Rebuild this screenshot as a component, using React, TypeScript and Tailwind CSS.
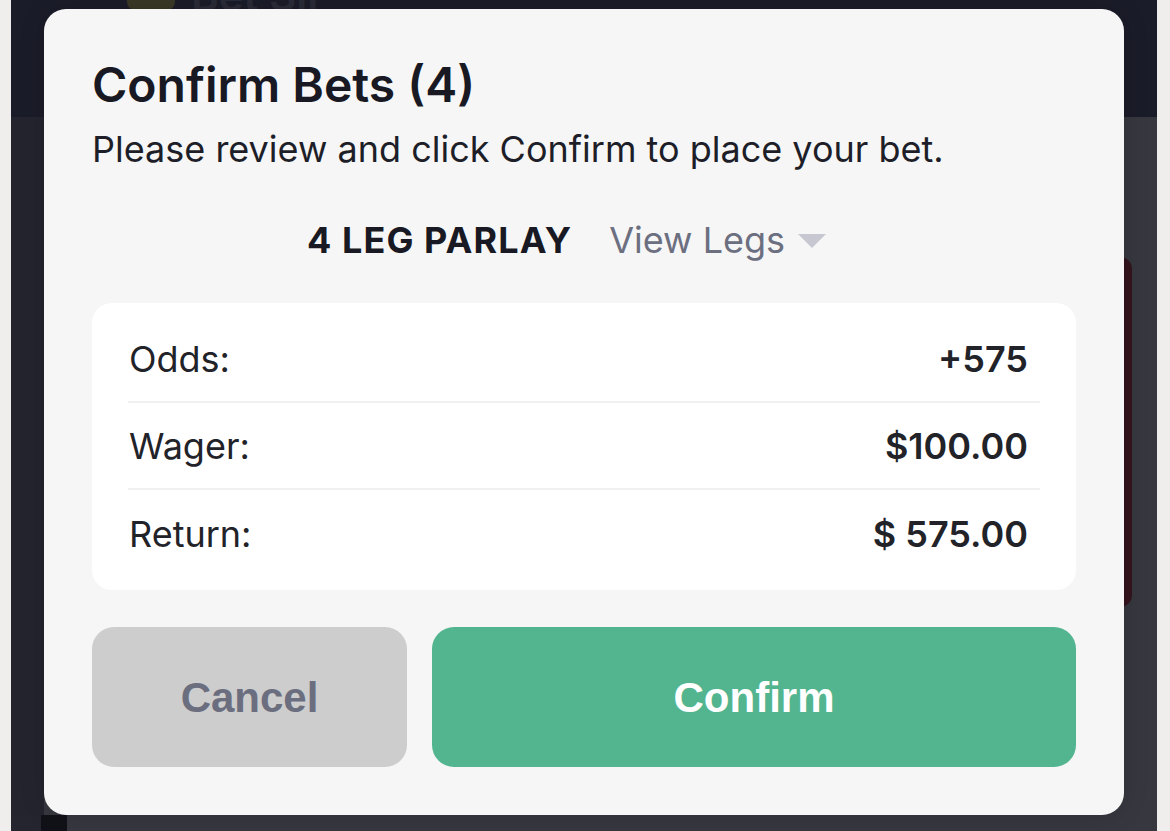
import { useState } from "react";

const ROWS = [
  { label: "Odds:", value: "+575" },
  { label: "Wager:", value: "$100.00" },
  { label: "Return:", value: "$ 575.00" },
];

function Caret() {
  return (
    <svg width="28" height="14" viewBox="0 0 28 14" className="ml-[13px] mt-[2px]">
      <path d="M0 0 H28 L14 14 Z" fill="#c6c7d1" />
    </svg>
  );
}

export default function App() {
  const [showLegs, setShowLegs] = useState(false);

  return (
    <div className="h-[831px] w-[1170px] overflow-hidden bg-[#efeeed] px-[11px] pr-[13px] [font-family:Inter,'Noto_Sans',sans-serif]">
      <div className="relative flex h-full flex-col bg-[#37373f]">
        {/* page behind the modal */}
        <div className="flex h-[117px] items-start gap-4 overflow-hidden bg-[#1b1c29] pl-[116px]">
          <div className="h-[10px] w-[48px] rounded-b-lg bg-[#3a3826]" />
          <span className="-mt-[24px] text-[42px] leading-[40px] font-semibold text-[#2a2b38]">Bet Sli</span>
        </div>
        <div className="flex flex-1">
          <div className="w-[33px] bg-[#23242e]" />
          <div className="flex-1" />
          <div className="mt-[140px] mr-[25px] h-[350px] w-[20px] rounded-r-xl bg-[#35141d]" />
        </div>
        <div className="flex h-[16px]">
          <div className="w-[30px] bg-[#24252f]" />
          <div className="w-[26px] bg-[#111118]" />
        </div>

        {/* modal */}
        <div className="absolute left-[33px] top-[9px] flex h-[806px] w-[1080px] flex-col rounded-[22px] bg-[#f6f6f7] px-[48px] pt-[47px] shadow-[0_0_24px_rgba(0,0,0,0.15)]">
          <h1 className="text-[48px] font-semibold leading-[58px] text-[#181923]">Confirm Bets (4)</h1>
          <p className="mt-[12px] text-[36px] leading-[46px] text-[#1d1e28]">
            Please review and click Confirm to place your bet.
          </p>

          <div className="mt-[28px] flex h-[80px] items-center pl-[215px]">
            <span className="text-[36px] font-bold tracking-[0.03em] text-[#181923]">4 LEG PARLAY</span>
            <button
              onClick={() => setShowLegs(!showLegs)}
              className="ml-[37px] flex items-center text-[36px] text-[#6c6f80]"
            >
              View Legs
              <Caret />
            </button>
          </div>

          <div className="mt-[23px] rounded-[20px] bg-white px-[36px] py-[13px]">
            {ROWS.map((row, i) => (
              <div
                key={row.label}
                className={`flex h-[87px] items-center justify-between text-[36px] text-[#222329] ${
                  i < ROWS.length - 1 ? "border-b-2 border-[#f0f0f1]" : ""
                }`}
              >
                <span className="pl-px">{row.label}</span>
                <span className="pr-[12px] font-semibold">{row.value}</span>
              </div>
            ))}
          </div>

          <div className="mt-[37px] flex h-[140px] gap-[25px] [font-family:'Liberation_Sans',Arial,sans-serif]">
            <button className="w-[315px] rounded-[22px] bg-[#cdcdcd] text-[42px] font-bold text-[#6b6e7f]">
              Cancel
            </button>
            <button className="flex-1 rounded-[22px] bg-[#53b58f] text-[42px] font-bold text-white">
              Confirm
            </button>
          </div>
        </div>
      </div>
    </div>
  );
}
